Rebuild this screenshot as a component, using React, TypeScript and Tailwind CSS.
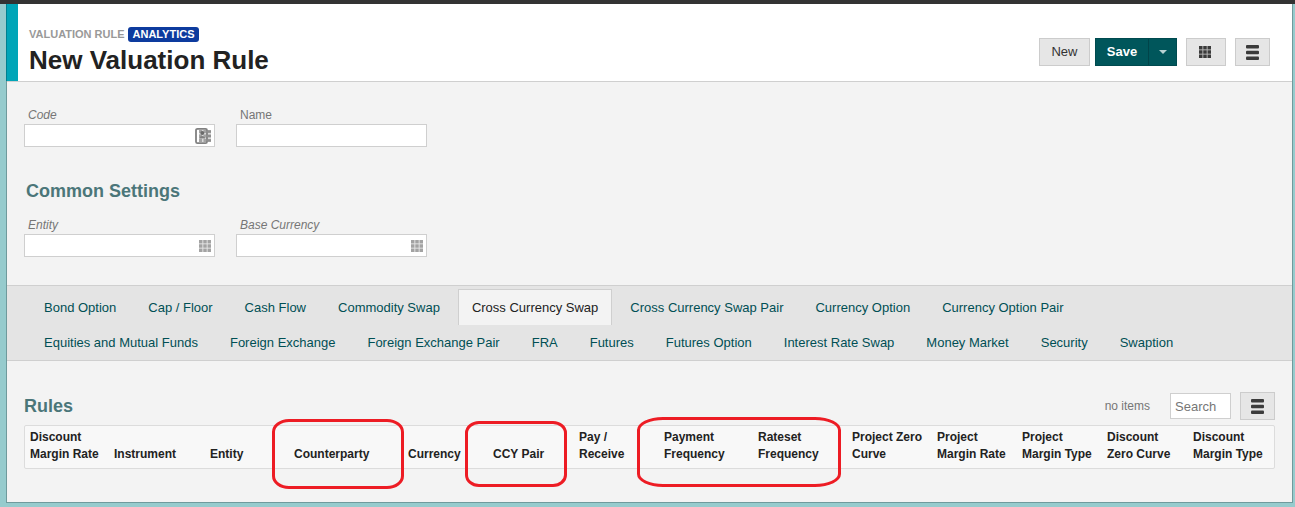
import { useState } from "react";

const tabRows = [
  [
    "Bond Option",
    "Cap / Floor",
    "Cash Flow",
    "Commodity Swap",
    "Cross Currency Swap",
    "Cross Currency Swap Pair",
    "Currency Option",
    "Currency Option Pair",
  ],
  [
    "Equities and Mutual Funds",
    "Foreign Exchange",
    "Foreign Exchange Pair",
    "FRA",
    "Futures",
    "Futures Option",
    "Interest Rate Swap",
    "Money Market",
    "Security",
    "Swaption",
  ],
];

type Column = { lines: string[]; width: string; ring?: string };

const columns: Column[] = [
  { lines: ["Discount", "Margin Rate"], width: "w-[84px]" },
  { lines: ["Instrument"], width: "w-[96px]" },
  { lines: ["Entity"], width: "w-[84px]" },
  {
    lines: ["Counterparty"],
    width: "w-[114px]",
    ring: "-left-[17px] -top-[7px] h-[70px] w-[132px] rounded-[17px/13px]",
  },
  { lines: ["Currency"], width: "w-[85px]" },
  {
    lines: ["CCY Pair"],
    width: "w-[86px]",
    ring: "-left-[23px] -top-[5px] h-[66px] w-[102px] rounded-[14px/12px]",
  },
  { lines: ["Pay /", "Receive"], width: "w-[85px]" },
  {
    lines: ["Payment", "Frequency"],
    width: "w-[94px]",
    ring: "-left-[22px] -top-[9px] h-[70px] w-[204px] rounded-[26px/13px]",
  },
  { lines: ["Rateset", "Frequency"], width: "w-[94px]" },
  { lines: ["Project Zero", "Curve"], width: "w-[85px]" },
  { lines: ["Project", "Margin Rate"], width: "w-[85px]" },
  { lines: ["Project", "Margin Type"], width: "w-[85px]" },
  { lines: ["Discount", "Zero Curve"], width: "w-[86px]" },
  { lines: ["Discount", "Margin Type"], width: "w-[86px]" },
];

function GridIcon({ className }: { className: string }) {
  return (
    <svg width="12" height="12" viewBox="0 0 12 12" fill="currentColor" className={className} aria-hidden="true">
      <rect width="12" height="12" opacity="0.25" />
      {[0, 4.3, 8.6].map((y) =>
        [0, 4.3, 8.6].map((x) => <rect key={`${x}-${y}`} x={x} y={y} width="3.4" height="3.4" />),
      )}
    </svg>
  );
}

function ListIcon() {
  return (
    <svg width="13" height="15" viewBox="0 0 13 15" fill="#3b3b3b" aria-hidden="true">
      <rect y="0" width="13" height="3.4" rx="1" />
      <rect y="5.8" width="13" height="3.4" rx="1" />
      <rect y="11.6" width="13" height="3.4" rx="1" />
    </svg>
  );
}

function ContactGridIcon() {
  return (
    <svg width="17" height="18" viewBox="0 0 17 18" fill="none" aria-hidden="true">
      <g fill="#a3a3a3">
        {[3, 7.3, 11.6].map((y) =>
          [5, 9.3, 13.6].map((x) => <rect key={`${x}-${y}`} x={x} y={y} width="3.4" height="3.4" />),
        )}
      </g>
      <rect x="2" y="1.8" width="11" height="14.4" rx="1.5" stroke="#808080" strokeWidth="1.8" />
      <path d="M12 4.7h5M12 9h5M12 13.3h5" stroke="#8f8f8f" strokeWidth="1.8" />
      <circle cx="8.3" cy="6" r="2" fill="#6b6b6b" />
      <path d="M5.2 11.6c0-3.6 6-3.6 6 0z" fill="#808080" />
    </svg>
  );
}

type FieldProps = { id: string; label: string; italic?: boolean; icon?: "grid" | "contact" };

function Field({ id, label, italic, icon }: FieldProps) {
  return (
    <div className="w-[191px]">
      <label
        htmlFor={id}
        className={`block pl-1 text-xs leading-[18px] text-[#767676] ${italic ? "italic" : ""}`}
      >
        {label}
      </label>
      <div className="flex h-[23px] items-center border border-[#cfcfcf] bg-white">
        <input id={id} type="text" className="h-full min-w-0 flex-1 px-1 text-xs outline-none" />
        {icon && (
          <button type="button" aria-label={`Choose ${label}`} className="pr-[3px]">
            {icon === "grid" ? <GridIcon className="text-[#a3a3a3]" /> : <ContactGridIcon />}
          </button>
        )}
      </div>
    </div>
  );
}

const grayButton =
  "flex h-7 items-center justify-center border border-[#cccccc] bg-[#e6e6e6] text-[13px] text-[#333333]";

export default function App() {
  const [active, setActive] = useState("Cross Currency Swap");

  return (
    <div className="min-h-screen border-t-4 border-[#333333] bg-[#96cbcd] pb-1 pl-[6px] pr-[2px] font-['Liberation_Sans',Arial,sans-serif]">
      <div className="border-r border-b border-[#6f9a9c] bg-[#f3f3f3]">
        <header className="flex border-l border-[#00808f] bg-white">
          <div className="w-[11px] bg-[#00a5b8]" />
          <div className="flex flex-1 items-start justify-between pb-[3px] pl-[11px] pr-[22px]">
            <div className="pt-[23px]">
              <div className="flex h-[15px] items-center gap-[3px] text-[11px] font-bold">
                <span className="text-[#999999]">VALUATION RULE</span>
                <span className="rounded-[3px] bg-[#0d3b9e] px-[5px] leading-[15px] text-white">ANALYTICS</span>
              </div>
              <h1 className="mt-px text-[26px] leading-[35px] font-bold text-[#222222]">New Valuation Rule</h1>
            </div>
            <div className="flex pt-[34px]">
              <button type="button" className={`${grayButton} w-[51px]`}>
                New
              </button>
              <div className="ml-[5px] flex h-7 border border-[#004a4f] bg-[#00565b] text-white">
                <button type="button" className="w-[53px] border-r border-[#004449] text-[13px] font-bold">
                  Save
                </button>
                <button type="button" aria-label="More save options" className="flex w-[27px] items-center justify-center">
                  <svg width="8" height="4" viewBox="0 0 8 4" fill="#b8d2d3" aria-hidden="true">
                    <path d="M0 0h8L4 4z" />
                  </svg>
                </button>
              </div>
              <button type="button" aria-label="Grid" className={`${grayButton} ml-[9px] w-10 pr-[2px]`}>
                <GridIcon className="text-[#3b3b3b]" />
              </button>
              <button type="button" aria-label="Menu" className={`${grayButton} ml-[9px] w-[35px]`}>
                <ListIcon />
              </button>
            </div>
          </div>
        </header>

        <main className="border-l border-[#6f9a9c]">
          <section className="border-t border-[#cfcfcf] px-[17px] pt-6 pb-7">
            <div className="flex gap-[21px]">
              <Field id="code" label="Code" italic icon="contact" />
              <Field id="name" label="Name" />
            </div>
            <h2 className="mt-8 mb-[13px] pl-[2px] text-lg leading-6 font-bold text-[#4b7679]">Common Settings</h2>
            <div className="flex gap-[21px]">
              <Field id="entity" label="Entity" italic icon="grid" />
              <Field id="base-currency" label="Base Currency" italic icon="grid" />
            </div>
          </section>

          <nav className="border-y border-[#cfcfcf] bg-[#e4e4e4] pt-[3px] pb-px pl-[23px]">
            {tabRows.map((row) => (
              <div key={row[0]} className="flex h-[35px] gap-1">
                {row.map((tab) => (
                  <button
                    key={tab}
                    type="button"
                    onClick={() => setActive(tab)}
                    className={`h-9 border border-b-0 px-[13px] text-[13px] whitespace-nowrap ${
                      tab === active
                        ? "border-[#cfcfcf] bg-[#f3f3f3] text-[#222222]"
                        : "border-transparent text-[#004f54]"
                    }`}
                  >
                    {tab}
                  </button>
                ))}
              </div>
            ))}
          </nav>

          <section className="pt-[31px] pr-[17px] pb-[33px] pl-[17px]">
            <div className="flex h-7 items-center justify-between">
              <h2 className="text-lg leading-6 font-bold text-[#4b7679]">Rules</h2>
              <div className="flex items-center">
                <span className="text-xs text-[#767676]">no items</span>
                <input
                  type="text"
                  aria-label="Search rules"
                  placeholder="Search"
                  className="ml-5 h-[26px] w-[61px] border border-[#cfcfcf] bg-white px-1 text-[13px] outline-none placeholder:text-[#767676]"
                />
                <button type="button" aria-label="Table menu" className={`${grayButton} ml-[9px] w-[35px]`}>
                  <ListIcon />
                </button>
              </div>
            </div>
            <table className="mt-[5px] w-full table-fixed border-separate border-spacing-0 rounded-xs border border-[#dcdcdc] bg-[#f8f8f8]">
              <thead>
                <tr>
                  {columns.map((c) => (
                    <th
                      key={c.lines.join(" ")}
                      scope="col"
                      className={`relative px-[5px] pt-[3px] pb-[5px] text-left align-bottom text-xs leading-[17px] font-bold whitespace-nowrap text-[#222222] ${c.width}`}
                    >
                      {c.lines.map((l) => (
                        <span key={l} className="block">
                          {l}
                        </span>
                      ))}
                      {c.ring && (
                        <span className={`pointer-events-none absolute z-10 border-[3px] border-[#ed1c24] ${c.ring}`} />
                      )}
                    </th>
                  ))}
                </tr>
              </thead>
            </table>
          </section>
        </main>
      </div>
    </div>
  );
}
